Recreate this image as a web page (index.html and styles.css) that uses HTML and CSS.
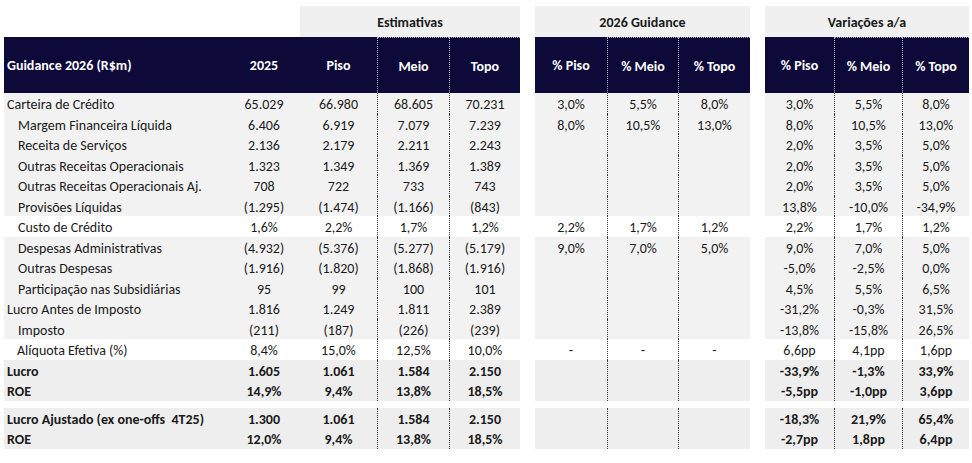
FILE: index.html
```html
<!DOCTYPE html>
<html lang="pt-BR">
<head>
<meta charset="utf-8">
<title>Guidance 2026</title>
<link rel="stylesheet" href="styles.css">
</head>
<body>
<div class="sheet">
  <div class="row title">
    <div class="blank2"></div>
    <div class="ttl span3">Estimativas</div>
    <div class="gap"></div>
    <div class="ttl span3">2026 Guidance</div>
    <div class="gap"></div>
    <div class="ttl span3">Variações a/a</div>
  </div>

  <div class="row head">
    <div class="c lbl">Guidance 2026 (R$m)</div>
    <div class="c">2025</div>
    <div class="c">Piso</div>
    <div class="c dl">Meio</div>
    <div class="c dl">Topo</div>
    <div class="gap"></div>
    <div class="c">% Piso</div>
    <div class="c dl">% Meio</div>
    <div class="c dl">% Topo</div>
    <div class="gap"></div>
    <div class="c">% Piso</div>
    <div class="c dl">% Meio</div>
    <div class="c dl">% Topo</div>
  </div>

  <div class="row g">
    <div class="c lbl">Carteira de Crédito</div>
    <div class="c">65.029</div><div class="c">66.980</div><div class="c dl">68.605</div><div class="c dl">70.231</div>
    <div class="gap"></div>
    <div class="c">3,0%</div><div class="c dl">5,5%</div><div class="c dl">8,0%</div>
    <div class="gap"></div>
    <div class="c">3,0%</div><div class="c dl">5,5%</div><div class="c dl">8,0%</div>
  </div>
  <div class="row g">
    <div class="c lbl in">Margem Financeira Líquida</div>
    <div class="c">6.406</div><div class="c">6.919</div><div class="c dl">7.079</div><div class="c dl">7.239</div>
    <div class="gap"></div>
    <div class="c">8,0%</div><div class="c dl">10,5%</div><div class="c dl">13,0%</div>
    <div class="gap"></div>
    <div class="c">8,0%</div><div class="c dl">10,5%</div><div class="c dl">13,0%</div>
  </div>
  <div class="row g">
    <div class="c lbl in">Receita de Serviços</div>
    <div class="c">2.136</div><div class="c">2.179</div><div class="c dl">2.211</div><div class="c dl">2.243</div>
    <div class="gap"></div>
    <div class="c"></div><div class="c dl"></div><div class="c dl"></div>
    <div class="gap"></div>
    <div class="c">2,0%</div><div class="c dl">3,5%</div><div class="c dl">5,0%</div>
  </div>
  <div class="row g">
    <div class="c lbl in">Outras Receitas Operacionais</div>
    <div class="c">1.323</div><div class="c">1.349</div><div class="c dl">1.369</div><div class="c dl">1.389</div>
    <div class="gap"></div>
    <div class="c"></div><div class="c dl"></div><div class="c dl"></div>
    <div class="gap"></div>
    <div class="c">2,0%</div><div class="c dl">3,5%</div><div class="c dl">5,0%</div>
  </div>
  <div class="row g">
    <div class="c lbl in">Outras Receitas Operacionais Aj.</div>
    <div class="c">708</div><div class="c">722</div><div class="c dl">733</div><div class="c dl">743</div>
    <div class="gap"></div>
    <div class="c"></div><div class="c dl"></div><div class="c dl"></div>
    <div class="gap"></div>
    <div class="c">2,0%</div><div class="c dl">3,5%</div><div class="c dl">5,0%</div>
  </div>
  <div class="row g">
    <div class="c lbl in">Provisões Líquidas</div>
    <div class="c">(1.295)</div><div class="c">(1.474)</div><div class="c dl">(1.166)</div><div class="c dl">(843)</div>
    <div class="gap"></div>
    <div class="c"></div><div class="c dl"></div><div class="c dl"></div>
    <div class="gap"></div>
    <div class="c">13,8%</div><div class="c dl">-10,0%</div><div class="c dl">-34,9%</div>
  </div>
  <div class="row w">
    <div class="c lbl in">Custo de Crédito</div>
    <div class="c">1,6%</div><div class="c">2,2%</div><div class="c dl">1,7%</div><div class="c dl">1,2%</div>
    <div class="gap"></div>
    <div class="c">2,2%</div><div class="c dl">1,7%</div><div class="c dl">1,2%</div>
    <div class="gap"></div>
    <div class="c">2,2%</div><div class="c dl">1,7%</div><div class="c dl">1,2%</div>
  </div>
  <div class="row g">
    <div class="c lbl in">Despesas Administrativas</div>
    <div class="c">(4.932)</div><div class="c">(5.376)</div><div class="c dl">(5.277)</div><div class="c dl">(5.179)</div>
    <div class="gap"></div>
    <div class="c">9,0%</div><div class="c dl">7,0%</div><div class="c dl">5,0%</div>
    <div class="gap"></div>
    <div class="c">9,0%</div><div class="c dl">7,0%</div><div class="c dl">5,0%</div>
  </div>
  <div class="row g">
    <div class="c lbl in">Outras Despesas</div>
    <div class="c">(1.916)</div><div class="c">(1.820)</div><div class="c dl">(1.868)</div><div class="c dl">(1.916)</div>
    <div class="gap"></div>
    <div class="c"></div><div class="c dl"></div><div class="c dl"></div>
    <div class="gap"></div>
    <div class="c">-5,0%</div><div class="c dl">-2,5%</div><div class="c dl">0,0%</div>
  </div>
  <div class="row g">
    <div class="c lbl in">Participação nas Subsidiárias</div>
    <div class="c">95</div><div class="c">99</div><div class="c dl">100</div><div class="c dl">101</div>
    <div class="gap"></div>
    <div class="c"></div><div class="c dl"></div><div class="c dl"></div>
    <div class="gap"></div>
    <div class="c">4,5%</div><div class="c dl">5,5%</div><div class="c dl">6,5%</div>
  </div>
  <div class="row g">
    <div class="c lbl">Lucro Antes de Imposto</div>
    <div class="c">1.816</div><div class="c">1.249</div><div class="c dl">1.811</div><div class="c dl">2.389</div>
    <div class="gap"></div>
    <div class="c"></div><div class="c dl"></div><div class="c dl"></div>
    <div class="gap"></div>
    <div class="c">-31,2%</div><div class="c dl">-0,3%</div><div class="c dl">31,5%</div>
  </div>
  <div class="row g">
    <div class="c lbl in">Imposto</div>
    <div class="c">(211)</div><div class="c">(187)</div><div class="c dl">(226)</div><div class="c dl">(239)</div>
    <div class="gap"></div>
    <div class="c"></div><div class="c dl"></div><div class="c dl"></div>
    <div class="gap"></div>
    <div class="c">-13,8%</div><div class="c dl">-15,8%</div><div class="c dl">26,5%</div>
  </div>
  <div class="row w">
    <div class="c lbl in2">Alíquota Efetiva (%)</div>
    <div class="c">8,4%</div><div class="c">15,0%</div><div class="c dl">12,5%</div><div class="c dl">10,0%</div>
    <div class="gap"></div>
    <div class="c">-</div><div class="c dl">-</div><div class="c dl">-</div>
    <div class="gap"></div>
    <div class="c">6,6pp</div><div class="c dl">4,1pp</div><div class="c dl">1,6pp</div>
  </div>
  <div class="row b">
    <div class="c lbl">Lucro</div>
    <div class="c">1.605</div><div class="c">1.061</div><div class="c dl">1.584</div><div class="c dl">2.150</div>
    <div class="gap"></div>
    <div class="c"></div><div class="c dl"></div><div class="c dl"></div>
    <div class="gap"></div>
    <div class="c">-33,9%</div><div class="c dl">-1,3%</div><div class="c dl">33,9%</div>
  </div>
  <div class="row b">
    <div class="c lbl">ROE</div>
    <div class="c">14,9%</div><div class="c">9,4%</div><div class="c dl">13,8%</div><div class="c dl">18,5%</div>
    <div class="gap"></div>
    <div class="c"></div><div class="c dl"></div><div class="c dl"></div>
    <div class="gap"></div>
    <div class="c">-5,5pp</div><div class="c dl">-1,0pp</div><div class="c dl">3,6pp</div>
  </div>
  <div class="spacer"></div>
  <div class="row b">
    <div class="c lbl">Lucro Ajustado (ex one-offs&nbsp; 4T25)</div>
    <div class="c">1.300</div><div class="c">1.061</div><div class="c dl">1.584</div><div class="c dl">2.150</div>
    <div class="gap"></div>
    <div class="c"></div><div class="c dl"></div><div class="c dl"></div>
    <div class="gap"></div>
    <div class="c">-18,3%</div><div class="c dl">21,9%</div><div class="c dl">65,4%</div>
  </div>
  <div class="row b">
    <div class="c lbl">ROE</div>
    <div class="c">12,0%</div><div class="c">9,4%</div><div class="c dl">13,8%</div><div class="c dl">18,5%</div>
    <div class="gap"></div>
    <div class="c"></div><div class="c dl"></div><div class="c dl"></div>
    <div class="gap"></div>
    <div class="c">-2,7pp</div><div class="c dl">1,8pp</div><div class="c dl">6,4pp</div>
  </div>
</div>
</body>
</html>
```

FILE: styles.css
```css
* { box-sizing: border-box; }
html, body { background: #ffffff; }
body {
  margin: 0;
  padding: 6px 0 0 4px;
  font-family: Carlito, Lato, "Liberation Sans", sans-serif;
  font-size: 14px;
  color: #1a1a1a;
}
.sheet { display: flex; flex-direction: column; }
.row {
  display: grid;
  grid-template-columns: 224px 72px 77px 72px 71px 15px 72px 71px 72px 15px 69px 68px 67px;
  height: 20.5px;
}
.c {
  display: flex;
  align-items: center;
  justify-content: center;
  padding-top: 3px;
  white-space: nowrap;
}
.lbl { justify-content: flex-start; padding-left: 3px; }
.lbl.in { padding-left: 14px; }
.lbl.in2 { padding-left: 13px; }
.gap { background: #ffffff; }

.title { height: 31px; }
.blank2 { grid-column: span 2; }
.ttl {
  grid-column: span 3;
  background: #f0f0f0;
  display: flex;
  align-items: center;
  justify-content: center;
  font-weight: 700;
  padding-top: 2px;
}

.head { height: 56px; }
.head .c {
  background: #0d0a3a;
  color: #ffffff;
  font-weight: 700;
  padding-top: 1px;
}
.head .dl {
  border-left: 1px dotted #a8a8b8;
  border-top: 1px dotted #a8a8b8;
}

.g .c { background: #f2f2f2; }
.w .c { background: #ffffff; }
.b .c { background: #eeeeee; font-weight: 700; }
.dl { border-left: 1px dotted #3a3a3a; }

.spacer { height: 7px; }
```
